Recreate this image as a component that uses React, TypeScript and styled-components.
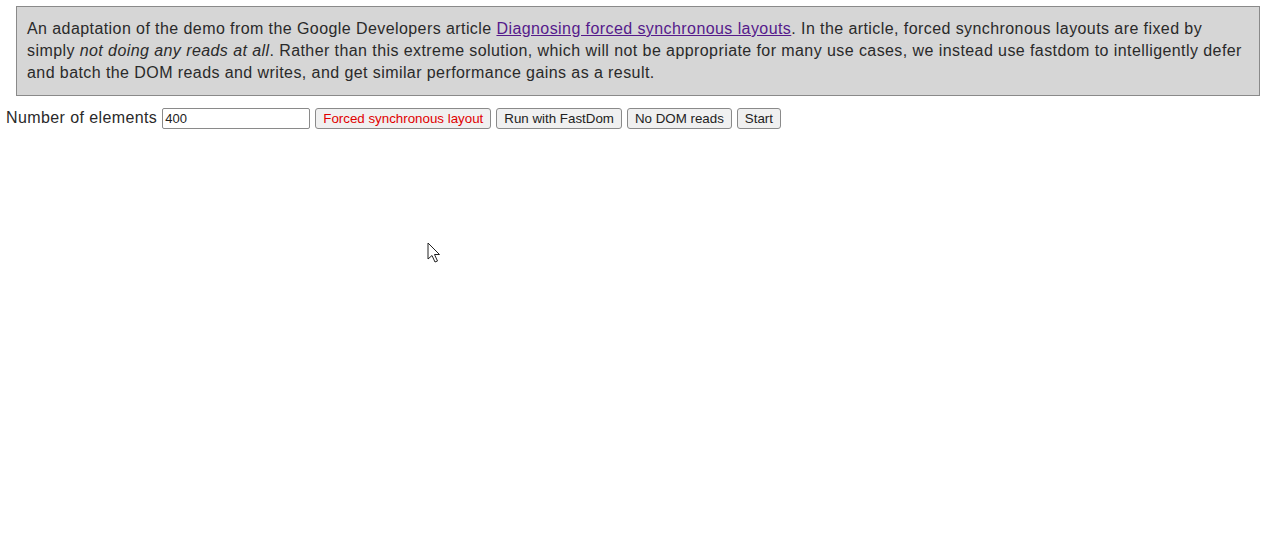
import React from "react";
import styled, { createGlobalStyle } from "styled-components";

const Global = createGlobalStyle`
  html, body { margin: 0; padding: 0; background: #fff; }
  body { font-family: "Liberation Sans", Arial, sans-serif; color: #222; }
`;

const Page = styled.div`
  position: relative;
  width: 1266px;
  height: 544px;
  padding: 6px 6px 0 6px;
  box-sizing: border-box;
`;

const Intro = styled.p`
  margin: 0 0 0 10px;
  padding: 11px 10px;
  background: #d6d6d6;
  border: 1px solid #8a8a8a;
  font-size: 16px;
  line-height: 22px;
  letter-spacing: 0.42px;
  color: #2a2a2a;
`;

const Link = styled.a`
  color: #551a8b;
  text-decoration: underline;
`;

const Controls = styled.div`
  display: flex;
  align-items: center;
  gap: 5px;
  margin-top: 11px;
  height: 22px;
`;

const Label = styled.label`
  font-size: 16px;
  letter-spacing: 0.4px;
  color: #2a2a2a;
`;

const Input = styled.input`
  box-sizing: border-box;
  width: 148px;
  height: 21px;
  padding: 1px 2px;
  border: 1px solid #8a8a8a;
  border-radius: 2px;
  font-family: "Liberation Sans", Arial, sans-serif;
  font-size: 13px;
  color: #222;
  outline: none;
`;

const Button = styled.button<{ $danger?: boolean }>`
  box-sizing: border-box;
  height: 21px;
  padding: 0 7px;
  border: 1px solid #8a8a8a;
  border-radius: 3px;
  background: #f0f0f0;
  font-family: "Liberation Sans", Arial, sans-serif;
  font-size: 13.33px;
  color: ${(p) => (p.$danger ? "#e00000" : "#222")};
  cursor: default;
`;

const Cursor = styled.svg`
  position: absolute;
  left: 427px;
  top: 242px;
`;

export default function App() {
  return (
    <>
      <Global />
      <Page>
        <Intro>
          An adaptation of the demo from the Google Developers article{" "}
          <Link href="#">Diagnosing forced synchronous layouts</Link>. In the
          article, forced synchronous layouts are fixed by simply{" "}
          <em>not doing any reads at all</em>. Rather than this extreme
          solution, which will not be appropriate for many use cases, we instead
          use fastdom to intelligently defer and batch the DOM reads and writes,
          and get similar performance gains as a result.
        </Intro>
        <Controls>
          <Label htmlFor="count">Number of elements</Label>
          <Input id="count" defaultValue="400" />
          <Button $danger>Forced synchronous layout</Button>
          <Button>Run with FastDom</Button>
          <Button>No DOM reads</Button>
          <Button>Start</Button>
        </Controls>
        <Cursor width="16" height="24" viewBox="0 0 16 24">
          <path
            d="M1 1 L1 17 L5 13.5 L8 20 L10.5 19 L7.5 12.5 L12.5 12.5 Z"
            fill="#fff"
            stroke="#222"
            strokeWidth="1"
            strokeLinejoin="round"
          />
        </Cursor>
      </Page>
    </>
  );
}
